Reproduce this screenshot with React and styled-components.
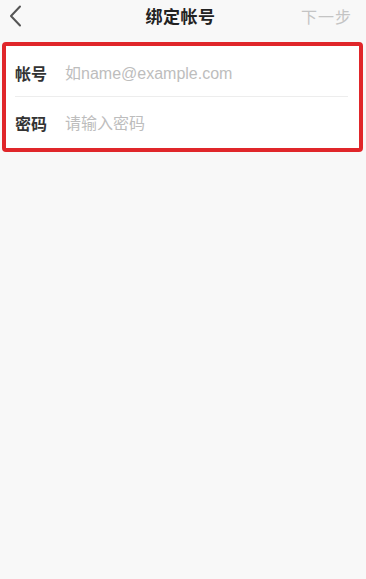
import React from "react";
import styled, { createGlobalStyle } from "styled-components";

const GlobalStyle = createGlobalStyle`
  body {
    margin: 0;
    background: #f8f8f8;
    font-family: "Noto Sans CJK SC", "Noto Sans", sans-serif;
  }
`;

const fields = [
  { label: "帐号", placeholder: "如name@example.com", type: "text" },
  { label: "密码", placeholder: "请输入密码", type: "password" },
];

export default function App() {
  return (
    <Page>
      <GlobalStyle />
      <NavBar>
        <Back aria-label="返回">
          <svg width="14" height="22" viewBox="0 0 14 22">
            <path
              d="M11 1.5 L2 11 L11 20.5"
              fill="none"
              stroke="#555"
              strokeWidth="2"
              strokeLinecap="round"
              strokeLinejoin="round"
            />
          </svg>
        </Back>
        <Title>绑定帐号</Title>
        <Next>下一步</Next>
      </NavBar>

      <Form>
        {fields.map((f, i) => (
          <Row key={f.label} last={i === fields.length - 1}>
            <Label>{f.label}</Label>
            <Input type={f.type} placeholder={f.placeholder} />
          </Row>
        ))}
      </Form>
    </Page>
  );
}

//styles

const Page = styled.div`
  min-height: 579px;
  background: #f8f8f8;
`;

const NavBar = styled.div`
  height: 34px;
  display: grid;
  grid-template-columns: 1fr auto 1fr;
  align-items: center;
  padding: 0 14px 0 9px;
`;

const Back = styled.div`
  display: flex;
  align-items: center;
  padding-bottom: 2px;
`;

const Title = styled.div`
  font-size: 17px;
  font-weight: 700;
  color: #222;
  letter-spacing: 0.5px;
  padding-bottom: 3px;
`;

const Next = styled.div`
  justify-self: end;
  font-size: 16px;
  color: #c4c4c4;
  letter-spacing: 1px;
  padding-bottom: 3px;
`;

const Form = styled.div`
  margin: 8px 3px 0 2px;
  background: #fff;
  border: 4px solid #e0262a;
  border-radius: 4px;
  padding-left: 9px;
`;

const Row = styled.div`
  height: 51px;
  display: flex;
  align-items: center;
  margin-right: 11px;
  padding-top: ${({ last }) => (last ? "0" : "3px")};
  box-sizing: border-box;
  border-bottom: ${({ last }) => (last ? "none" : "1px solid #ededed")};
`;

const Label = styled.span`
  width: 50px;
  flex-shrink: 0;
  font-size: 16px;
  font-weight: 700;
  color: #333;
`;

const Input = styled.input`
  flex: 1;
  border: none;
  outline: none;
  padding: 2px 0 0;
  background: transparent;
  font-family: "Liberation Sans", "Noto Sans CJK SC", sans-serif;
  font-size: 16px;
  color: #333;

  &::placeholder {
    color: #bdbdbd;
  }
`;
